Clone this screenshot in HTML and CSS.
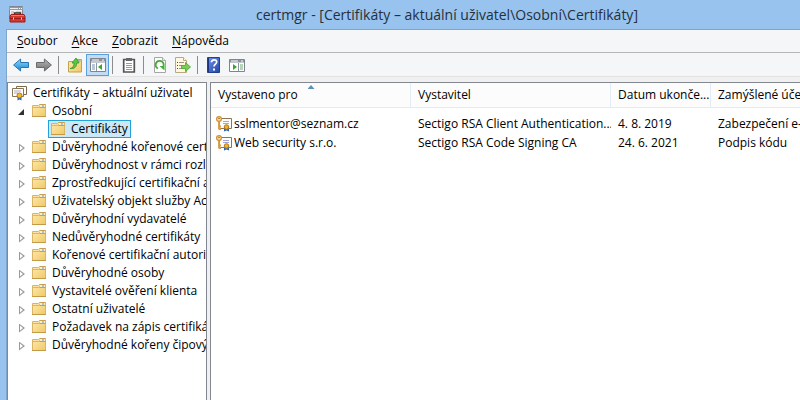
FILE: index.html
```html
<!DOCTYPE html>
<html lang="cs">
<head>
<meta charset="utf-8">
<title>certmgr</title>
<link rel="stylesheet" href="styles.css">
</head>
<body>
<svg class="defs" aria-hidden="true">
  <defs>
    <linearGradient id="gold" x1="0" y1="0" x2="1" y2="1"><stop offset="0" stop-color="#ffeab0"/><stop offset="1" stop-color="#efc965"/></linearGradient>
    <linearGradient id="blue" x1="0" y1="0" x2="0" y2="1"><stop offset="0" stop-color="#8edcff"/><stop offset="1" stop-color="#1683cf"/></linearGradient>
    <linearGradient id="grey" x1="0" y1="0" x2="0" y2="1"><stop offset="0" stop-color="#b9b9b9"/><stop offset="1" stop-color="#6f6f6f"/></linearGradient>
    <linearGradient id="help" x1="0" y1="0" x2="1" y2="1"><stop offset="0" stop-color="#6f94e8"/><stop offset="1" stop-color="#2344a8"/></linearGradient>
  </defs>
  <symbol id="folder" viewBox="0 0 15 14">
    <path d="M.5 12.500V1.500h6l1-1h6v12z" fill="url(#gold)" stroke="#d9b565"/>
    <path d="M1 3.500h5.500l1.500-1" fill="none" stroke="#d9b565"/>
    <path d="M7.500.500h6M7.500 3.500h6" stroke="#c9a04f"/>
    <path d="M8 2h5" stroke="#fff"/><path d="M10 2h2" stroke="#5b9bd0"/>
    <path d="M0 12.500h14" stroke="#c39a48"/>
  </symbol>
  <symbol id="certs" viewBox="0 0 16 16">
    <path d="M4.500 1.500h10v8h-10z" fill="#fff" stroke="#7d6a50"/>
    <path d="M.5 3.500h11v8H.5z" fill="#fff" stroke="#8a7350"/>
    <path d="M2 6h7M2 8h4" stroke="#a9a9c4"/>
    <path d="M5.500 11v4.500l2-1 2 1V11z" fill="#2b66c9"/>
    <circle cx="7.500" cy="10.500" r="2.500" fill="#f5b52e" stroke="#b9780d"/>
  </symbol>
  <symbol id="keycert" viewBox="0 0 16 16">
    <path d="M3.500 2.500h12v10h-12z" fill="#fff" stroke="#8b7558"/>
    <path d="M7 5.500h6M7 7.500h6" stroke="#a4a8d8"/>
    <path d="M8 11v4.500l2.500-1 2.500 1V11z" fill="#2b66c9"/>
    <circle cx="10.500" cy="11" r="2.300" fill="#eeb024" stroke="#b67c14"/>
    <path d="M3 5v8.500M3 10.500h2M3 13h2" fill="none" stroke="#d99a45" stroke-width="1.800"/>
    <circle cx="3" cy="3" r="2.400" fill="#ffe5a2" stroke="#d08f35" stroke-width="1.200"/>
    <circle cx="3" cy="2.500" r=".7" fill="#805010"/>
  </symbol>
</svg>
<div class="window">
  <header class="titlebar">
    <svg class="app-icon" viewBox="0 0 18 18" aria-hidden="true">
      <path d="M1.500 .5h13v12h-13z" fill="#f3f3f3" stroke="#7e8790"/><path d="M1 1h14v3H1z" fill="#929ba3"/><path d="M2 2.500h8" stroke="#e7edf2"/><path d="M11 2.500h1M13 2.500h1" stroke="#fff"/><path d="M3 6h3M3 8h2M8 6h5" stroke="#aaa"/>
      <path d="M6.500 9V7h6v2" fill="none" stroke="#333" stroke-width="1.500"/>
      <path d="M3 8.500h13l1 2V16H2v-5.500z" fill="#d8372d" stroke="#9e1d18"/><path d="M3 9.500h13" stroke="#f07a65"/><path d="M2 12.500h15" stroke="#941b16"/><path d="M5 11.500h1v2H5zM13 11.500h1v2h-1z" fill="#ddd"/>
    </svg>
    <h1>certmgr - [Certifikáty – aktuální uživatel\Osobní\Certifikáty]</h1>
  </header>
  <div class="frame">
    <nav class="menubar">
      <button><u>S</u>oubor</button><button><u>A</u>kce</button><button><u>Z</u>obrazit</button><button><u>N</u>ápověda</button>
    </nav>
    <div class="toolbar" role="toolbar" aria-label="Panel nástrojů">
      <button aria-label="Zpět"><svg viewBox="0 0 16 16"><path d="M.6 8l7-6v3.500H15.500v5H7.600V14z" fill="url(#blue)" stroke="#2a74ae"/></svg></button>
      <button aria-label="Vpřed"><svg viewBox="0 0 16 16"><path d="M15.400 8l-7-6v3.500H.5v5h7.900V14z" fill="url(#grey)" stroke="#6a6a6a"/></svg></button>
      <span class="sep"></span>
      <button aria-label="O úroveň výš"><svg viewBox="0 0 16 16"><path d="M1.500 15V4.500h5l2-2h6V15z" fill="url(#gold)" stroke="#c9a04a"/><path d="M10.500 4h3" stroke="#5b9bd0"/><path d="M3 11.500c3-.5 4-2.500 4.200-5.500H5l4-5 3 5H9.700c0 4-2.200 6-6.700 5.500z" fill="#5fc83f" stroke="#32942a" stroke-width=".8"/></svg></button>
      <button class="active" aria-label="Zobrazit strom konzoly"><svg viewBox="0 0 16 16"><path d="M.5 1.500h15v13H.5z" fill="#fff" stroke="#7d858e"/><path d="M1 2h14v2.500H1z" fill="#8a939d"/><path d="M2 3h7M12 3h2" stroke="#fff"/><path d="M1 5.500h14" stroke="#c5cad0"/><path d="M6.500 6v8" stroke="#8e969f"/><path d="M2 8h3M2 10h3M2 12h3" stroke="#7090b0"/><path d="M12 7v6l-4-3z" fill="#39a62e"/></svg></button>
      <span class="sep"></span>
      <button aria-label="Vložit"><svg viewBox="0 0 16 16"><path d="M2.700 2.500h10.600v12.500H2.700z" fill="#fff" stroke="#555" stroke-width="1.700"/><path d="M5 1h6v3H5z" fill="#666"/><path d="M5 6.500h6M5 8.500h6M5 10.500h6M5 12.500h6" stroke="#999"/></svg></button>
      <span class="sep"></span>
      <button aria-label="Aktualizovat"><svg viewBox="0 0 16 16"><path d="M2.500.5h8l3 3v12h-11z" fill="#fff" stroke="#a5a5a5"/><path d="M10.500.5v3h3" fill="#eee" stroke="#aaa"/><path d="M6 11.500A4 4 0 1 1 11.500 9" fill="none" stroke="#42ad35" stroke-width="1.900"/><path d="M7.500 9h5v4.500z" fill="#42ad35"/></svg></button>
      <button aria-label="Exportovat seznam"><svg viewBox="0 0 16 16"><path d="M.5.500h8l3 3v12H.5z" fill="#fff8df" stroke="#b8a985"/><path d="M8.500.500v3h3" fill="#fff" stroke="#b8a985"/><path d="M2 5.500h1M2 8.500h1M2 11.500h1" stroke="#444"/><path d="M4 5.500h5M4 8.500h3M4 11.500h3" stroke="#99958a"/><path d="M6.500 8.500h4V5.500l5 4.500-5 4.500v-3h-4z" fill="#76cf53" stroke="#48a331" stroke-width=".8"/></svg></button>
      <span class="sep"></span>
      <button aria-label="Nápověda"><svg viewBox="0 0 16 16"><path d="M1.500.5h12v15h-12z" fill="url(#help)" stroke="#253f90"/><path d="M2.500 1v14" stroke="#1b3584"/><path d="M5.500 5.200c0-3.200 5.200-3 5.200-.2 0 2-2.700 2.200-2.700 4.500" fill="none" stroke="#fff" stroke-width="1.700"/><path d="M7 11.500h2v2H7z" fill="#fff"/></svg></button>
      <button aria-label="Zobrazit podokno akcí"><svg viewBox="0 0 16 16"><path d="M.5 2.500h15v12H.5z" fill="#fff" stroke="#7d858e"/><path d="M1 3h14v2.500H1z" fill="#8a939d"/><path d="M2 4h7M12 4h2" stroke="#fff"/><path d="M9.500 6v8" stroke="#8e969f"/><path d="M11 8h3M11 10h3M11 12h3" stroke="#6aaa70"/><path d="M4 7v6l4-3z" fill="#39a62e"/></svg></button>
    </div>
    <main class="panes">
      <nav class="tree" aria-label="Strom konzoly">
        <div class="row root"><svg class="i16"><use href="#certs"/></svg><span>Certifikáty – aktuální uživatel</span></div>
        <ul>
          <li><div class="row"><button class="toggle open" aria-label="Sbalit"></button><svg class="folder"><use href="#folder"/></svg><span>Osobní</span></div>
            <ul><li class="row child"><a class="selected" href="#certifikaty"><svg class="folder"><use href="#folder"/></svg><span>Certifikáty</span></a></li></ul></li>
          <li class="row"><button class="toggle" aria-label="Rozbalit"></button><svg class="folder"><use href="#folder"/></svg><span>Důvěryhodné kořenové certifikační autority</span></li>
          <li class="row"><button class="toggle" aria-label="Rozbalit"></button><svg class="folder"><use href="#folder"/></svg><span>Důvěryhodnost v rámci rozlehlé sítě</span></li>
          <li class="row"><button class="toggle" aria-label="Rozbalit"></button><svg class="folder"><use href="#folder"/></svg><span>Zprostředkující certifikační autority</span></li>
          <li class="row"><button class="toggle" aria-label="Rozbalit"></button><svg class="folder"><use href="#folder"/></svg><span>Uživatelský objekt služby Active Directory</span></li>
          <li class="row"><button class="toggle" aria-label="Rozbalit"></button><svg class="folder"><use href="#folder"/></svg><span>Důvěryhodní vydavatelé</span></li>
          <li class="row"><button class="toggle" aria-label="Rozbalit"></button><svg class="folder"><use href="#folder"/></svg><span>Nedůvěryhodné certifikáty</span></li>
          <li class="row"><button class="toggle" aria-label="Rozbalit"></button><svg class="folder"><use href="#folder"/></svg><span>Kořenové certifikační autority</span></li>
          <li class="row"><button class="toggle" aria-label="Rozbalit"></button><svg class="folder"><use href="#folder"/></svg><span>Důvěryhodné osoby</span></li>
          <li class="row"><button class="toggle" aria-label="Rozbalit"></button><svg class="folder"><use href="#folder"/></svg><span>Vystavitelé ověření klienta</span></li>
          <li class="row"><button class="toggle" aria-label="Rozbalit"></button><svg class="folder"><use href="#folder"/></svg><span>Ostatní uživatelé</span></li>
          <li class="row"><button class="toggle" aria-label="Rozbalit"></button><svg class="folder"><use href="#folder"/></svg><span>Požadavek na zápis certifikátu</span></li>
          <li class="row"><button class="toggle" aria-label="Rozbalit"></button><svg class="folder"><use href="#folder"/></svg><span>Důvěryhodné kořeny čipových karet</span></li>
        </ul>
      </nav>
      <section class="list" id="certifikaty">
        <table>
          <colgroup><col class="c-subject"><col class="c-issuer"><col class="c-date"><col class="c-purpose"></colgroup>
          <thead><tr><th class="sorted" aria-sort="ascending">Vystaveno pro</th><th>Vystavitel</th><th>Datum ukonče...</th><th>Zamýšlené účely</th></tr></thead>
          <tbody>
            <tr><td class="name"><div><svg class="i16"><use href="#keycert"/></svg>sslmentor@seznam.cz</div></td><td>Sectigo RSA Client Authentication...</td><td>4. 8. 2019</td><td>Zabezpečení e-mailu</td></tr>
            <tr><td class="name"><div><svg class="i16"><use href="#keycert"/></svg>Web security s.r.o.</div></td><td>Sectigo RSA Code Signing CA</td><td>24. 6. 2021</td><td>Podpis kódu</td></tr>
          </tbody>
        </table>
      </section>
    </main>
  </div>
</div>
</body>
</html>
```
FILE: styles.css
```css
* { box-sizing: border-box; }
body { margin: 0; font: 12px/18px "Open Sans", "Noto Sans", sans-serif; color: #000; overflow: hidden; }
.defs { position: absolute; width: 0; height: 0; }
button { border: 0; background: none; padding: 0; font: inherit; color: inherit; }
.window { display: flex; flex-direction: column; height: 100vh; background: #97c3ee; padding-left: 6px; }
.titlebar { display: flex; align-items: center; height: 29px; padding-left: 2px; }
.app-icon { width: 18px; height: 18px; }
h1 { flex: 1; margin: 0; padding-left: 68px; text-align: center; font-size: 14px; line-height: 20px; font-weight: 400; color: #26303c; white-space: nowrap; }
.frame { flex: 1; min-height: 0; display: flex; flex-direction: column; border: solid #7fa5cb; border-width: 1px 0 0 1px; background: #f0f0f0; }
.menubar { display: flex; gap: 14px; height: 23px; padding-left: 10px; background: #f5f6f7; border-bottom: 1px solid #b5b5b5; }
u { text-underline-offset: 2px; }
.toolbar { display: flex; align-items: center; height: 24px; padding-left: 2px; background: #f5f6f7; border-bottom: 1px solid #e2e2e2; }
.toolbar button { display: grid; place-items: center; width: 23px; height: 22px; }
.toolbar svg { width: 16px; height: 16px; }
.toolbar .active { background: #c2dcf5; border: 1px solid #5a9fe0; }
.sep { width: 1px; height: 18px; margin: 0 4px 0 3px; background: #8c8c8c; }
.panes { flex: 1; min-height: 0; display: flex; gap: 3px; padding-top: 5px; }
.tree { width: 200px; overflow: hidden; background: #fff; border: 1px solid #828790; border-bottom: 0; padding-top: 1px; }
.list { flex: 1; min-width: 0; overflow: hidden; background: #fff; border: solid #828790; border-width: 1px 0 0 1px; }
ul { list-style: none; margin: 0; padding: 0; }
.row { display: flex; align-items: center; height: 18px; white-space: nowrap; padding-left: 8px; }
.row.root { padding-left: 4px; gap: 5px; }
.row.child { padding-left: 40px; }
.row > svg, .row a > svg { flex: none; }
.i16 { width: 16px; height: 16px; flex: none; }
.folder { width: 15px; height: 14px; margin-right: 5px; }
.toggle { flex: none; display: flex; align-items: center; width: 16px; height: 18px; padding: 2px 0 0 3px; }
.toggle::before { content: ""; width: 6px; height: 9px; background: #9a9a9a; clip-path: polygon(0 0, 100% 50%, 0 100%, 0 0, 1px 2px, 1px 7px, 4px 50%, 1px 2px); }
.toggle.open { padding-left: 2px; }
.toggle.open::before { height: 6px; background: #303030; clip-path: polygon(100% 0, 100% 100%, 0 100%); }
.selected { display: flex; align-items: center; height: 18px; padding: 0 2px; border: 1px solid #26a0da; background: #cbe8f6; color: inherit; text-decoration: none; }
table { width: 621px; table-layout: fixed; border-collapse: separate; border-spacing: 0; }
.c-subject, .c-issuer { width: 200px; }
.c-date { width: 100px; }
th, td { padding: 0 0 0 7px; text-align: left; font-weight: 400; white-space: nowrap; overflow: hidden; }
th { height: 25px; border-right: 1px solid #e1ecf5; border-bottom: 1px solid #e1ecf5; background: #fcfcfc; }
.sorted { position: relative; }
.sorted::after { content: ""; position: absolute; top: 2px; left: calc(50% - 3px); width: 7px; height: 4px; background: #5c93b0; clip-path: polygon(50% 0, 100% 100%, 0 100%); }
td { height: 19px; line-height: 19px; }
tbody::before { content: ""; display: block; height: 6px; }
td.name { padding-left: 5px; }
.name div { display: flex; align-items: center; gap: 2px; }
```
